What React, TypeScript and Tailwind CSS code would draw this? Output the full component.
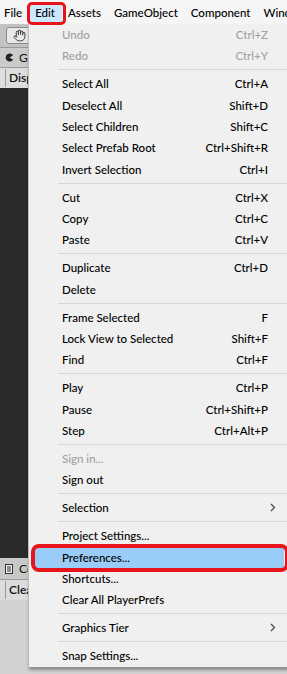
import React from 'react';
import { Hand } from 'lucide-react';

type Item = { label: string; shortcut?: string; disabled?: boolean; sub?: boolean; active?: boolean };

const groups: Item[][] = [
  [
    { label: 'Undo', shortcut: 'Ctrl+Z', disabled: true },
    { label: 'Redo', shortcut: 'Ctrl+Y', disabled: true },
  ],
  [
    { label: 'Select All', shortcut: 'Ctrl+A' },
    { label: 'Deselect All', shortcut: 'Shift+D' },
    { label: 'Select Children', shortcut: 'Shift+C' },
    { label: 'Select Prefab Root', shortcut: 'Ctrl+Shift+R' },
    { label: 'Invert Selection', shortcut: 'Ctrl+I' },
  ],
  [
    { label: 'Cut', shortcut: 'Ctrl+X' },
    { label: 'Copy', shortcut: 'Ctrl+C' },
    { label: 'Paste', shortcut: 'Ctrl+V' },
  ],
  [
    { label: 'Duplicate', shortcut: 'Ctrl+D' },
    { label: 'Delete' },
  ],
  [
    { label: 'Frame Selected', shortcut: 'F' },
    { label: 'Lock View to Selected', shortcut: 'Shift+F' },
    { label: 'Find', shortcut: 'Ctrl+F' },
  ],
  [
    { label: 'Play', shortcut: 'Ctrl+P' },
    { label: 'Pause', shortcut: 'Ctrl+Shift+P' },
    { label: 'Step', shortcut: 'Ctrl+Alt+P' },
  ],
  [
    { label: 'Sign in...', disabled: true },
    { label: 'Sign out' },
  ],
  [{ label: 'Selection', sub: true }],
  [
    { label: 'Project Settings...' },
    { label: 'Preferences...', active: true },
    { label: 'Shortcuts...' },
    { label: 'Clear All PlayerPrefs' },
  ],
  [{ label: 'Graphics Tier', sub: true }],
  [{ label: 'Snap Settings...' }],
];

const font = { fontFamily: 'Lato, "Open Sans", sans-serif' };

function Row({ item }: { item: Item }) {
  const pad = item.active ? 'mx-[4px] bg-[#99cdf7] pl-[29px] pr-[16px]' : 'pl-[33px] pr-[20px]';
  return (
    <div
      className={`relative flex h-[21.33px] items-center text-[11.5px] font-medium ${pad} ${
        item.disabled ? 'text-[#a0a0a0]' : 'text-black'
      }`}
    >
      <span className="flex-1 whitespace-nowrap">{item.label}</span>
      {item.shortcut && <span className="whitespace-nowrap">{item.shortcut}</span>}
      {item.sub && (
        <svg width="6" height="9" viewBox="0 0 6 9" className="mr-[-8px]">
          <path d="M1 1l3.5 3.5L1 8" fill="none" stroke="#444" strokeWidth="1.2" />
        </svg>
      )}
    </div>
  );
}

export default function App() {
  const menuBar = ['File', 'Edit', 'Assets', 'GameObject', 'Component', 'Wind'];
  return (
    <div className="relative h-[674px] w-[287px] overflow-hidden bg-[#cbcbcb]" style={font}>
      <div className="flex h-[24px] items-end gap-[13px] overflow-hidden bg-[#f5f5f5] pl-[4px] text-[11.5px] font-medium text-black">
        {menuBar.map(m => (
          <span
            key={m}
            className={`whitespace-nowrap leading-[20px] pb-[1px] ${m === 'Edit' ? 'bg-[#cce8ff] px-[7px] mx-[-7px]' : ''}`}
          >
            {m}
          </span>
        ))}
      </div>

      {/* editor behind the menu */}
      <div className="flex h-[650px] flex-col">
        <div className="flex h-[24px] items-center border-b border-[#9a9a9a] bg-[#c2c2c2] pl-[6px]">
          <div className="flex h-[17px] w-[40px] items-center rounded-[3px] border border-[#8a8a8a] bg-[#e8e8e8] pl-[6px]">
            <Hand size={13} strokeWidth={1.6} color="#222" />
          </div>
        </div>
        <div className="flex h-[20px] items-center gap-[5px] border-b border-[#9a9a9a] bg-[#cbcbcb] pl-[5px] text-[12px] text-[#111]">
          <svg width="9" height="9" viewBox="0 0 10 10">
            <path d="M9 2.5A4.5 4.5 0 1 0 9 7.5L5 5z" fill="#222" />
          </svg>
          <span>Game</span>
        </div>
        <div className="flex h-[20px] items-center bg-[#dedede] pl-[5px] text-[12px] text-[#111]">
          <span className="border-l border-[#9a9a9a] pl-[3px] font-semibold">Display 1</span>
        </div>
        <div className="h-[470px] bg-[#2a2a2a]" />
        <div className="flex h-[22px] items-center gap-[6px] border-b border-[#9a9a9a] bg-[#c8c8c8] pl-[5px] text-[12px] text-[#111]">
          <svg width="8" height="10" viewBox="0 0 8 10">
            <rect x="0.5" y="0.5" width="7" height="9" fill="#eee" stroke="#333" />
            <path d="M2 3h4M2 5h4M2 7h4" stroke="#333" />
          </svg>
          <span>Console</span>
        </div>
        <div className="flex h-[20px] items-center bg-[#dcdcdc] pl-[5px] text-[12px] text-[#111]">
          <span className="border-l border-[#9a9a9a] pl-[3px] font-semibold">Clear</span>
        </div>
        <div className="flex-1 bg-[#d2d2d2]" />
      </div>

      {/* Edit dropdown */}
      <div className="absolute left-[28px] top-[24px] w-[260px] border-l border-[#bdbdbd] bg-[#f0f0f0] pb-[1px] shadow-[1px_3px_3px_rgba(0,0,0,0.35)]">
        {groups.map((g, gi) => (
          <div key={gi}>
            {gi > 0 && (
              <div className="flex h-[6.67px] items-center pl-[29px]">
                <div className="h-px w-full bg-[#d7d7d7]" />
              </div>
            )}
            {g.map(it => (
              <Row key={it.label} item={it} />
            ))}
          </div>
        ))}
      </div>

      {/* red annotation outlines */}
      <div className="pointer-events-none absolute left-[27px] top-[2px] h-[23px] w-[39px] rounded-[5px] border-[3px] border-[#e8141c]" />
      <div className="pointer-events-none absolute left-[31px] top-[544px] h-[28px] w-[258px] rounded-[8px] border-[4px] border-[#e8141c]" />
    </div>
  );
}
